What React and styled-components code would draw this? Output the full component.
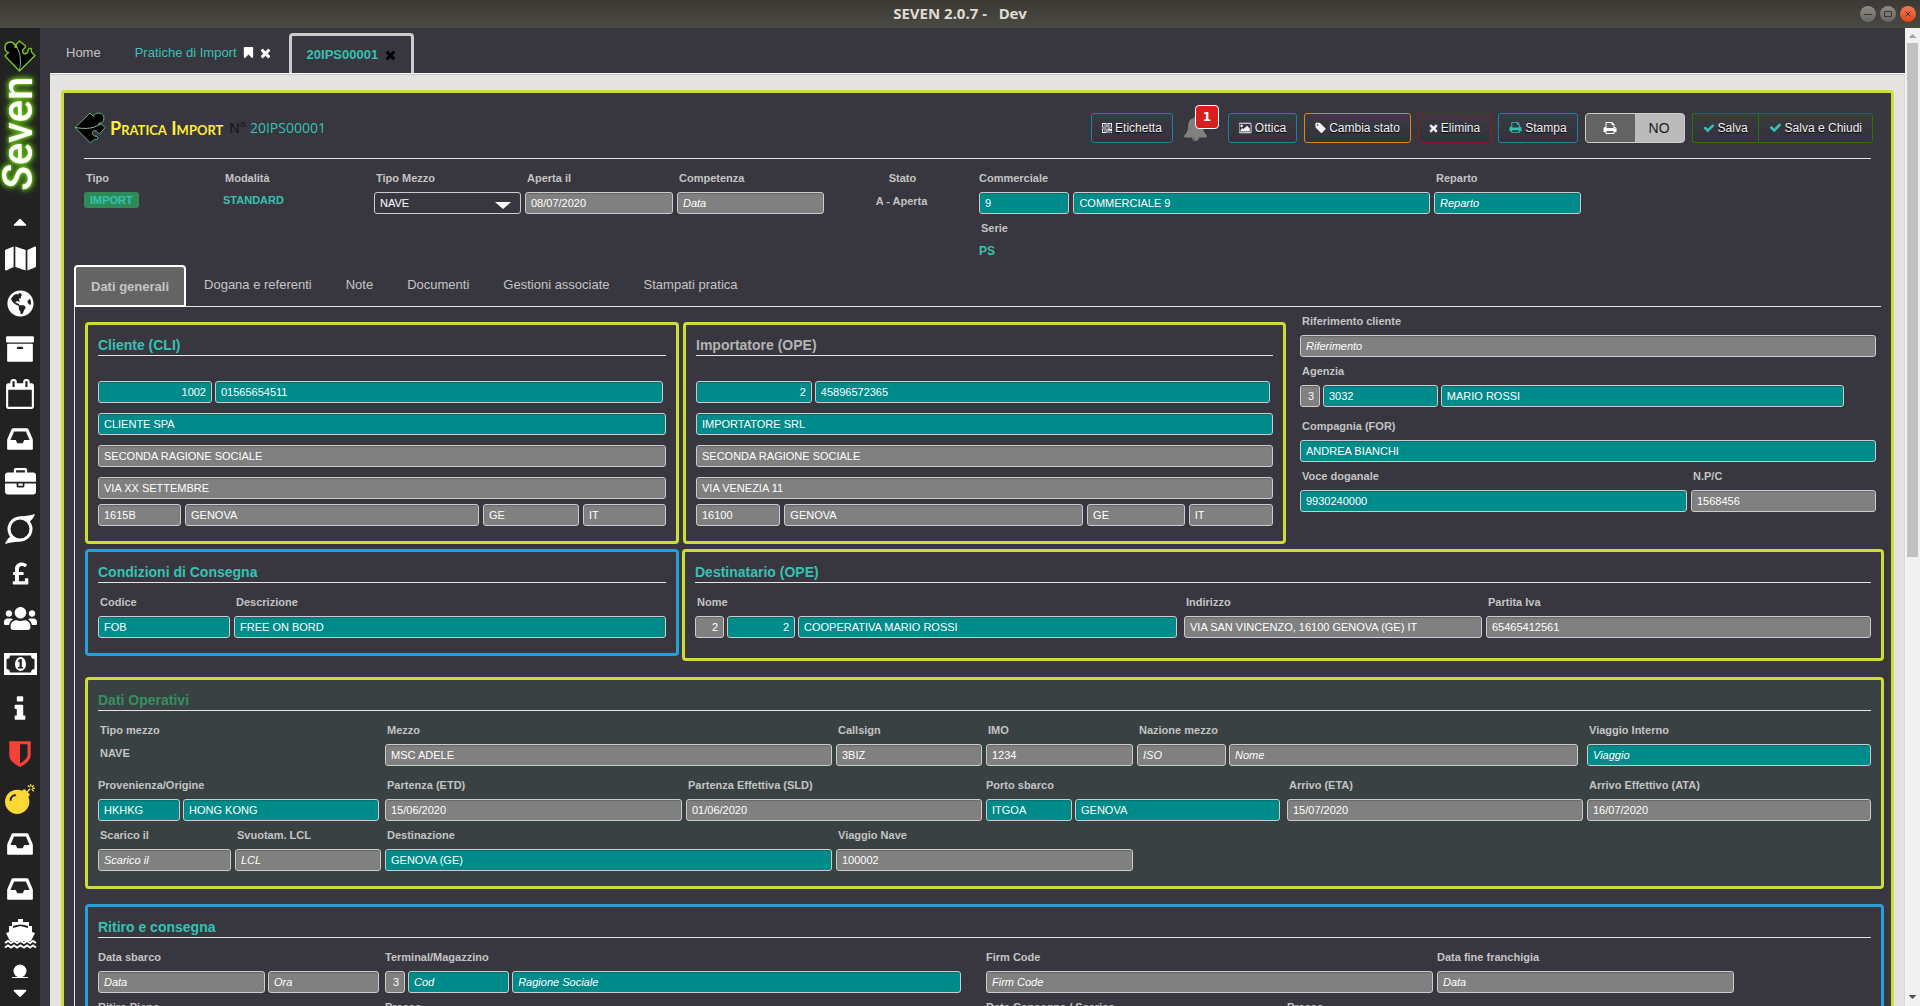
import React, { useId } from "react";
import styled, { createGlobalStyle, css } from "styled-components";
import { FaBomb, FaGlobeAmericas, FaMap, FaPoundSign, FaUsers } from "react-icons/fa";

const colors = {
  dark: "#383740",
  sidebar: "#222222",
  teal: "#35c2b3",
  field: "#008b8b",
  muted: "#808080",
  text: "#c4c4c4",
  lime: "#cddc39",
  blue: "#25a0da",
};

const GlobalStyle = createGlobalStyle`
  * {
    box-sizing: border-box;
  }
  body {
    margin: 0;
    background: ${colors.dark};
    font-family: "Liberation Sans", Arial, sans-serif;
    font-size: 11px;
    color: ${colors.text};
  }
  button, input, select {
    font-family: inherit;
    margin: 0;
  }
`;

/* ---------- icons ---------- */

const paths = {
  check: "M1671 566q0 40-28 68l-724 724-136 136q-28 28-68 28t-68-28l-136-136-362-362q-28-28-28-68t28-68l136-136q28-28 68-28t68 28l294 295 656-657q28-28 68-28t68 28l136 136q28 28 28 68z",
  times: "M1490 1322q0 40-28 68l-136 136q-28 28-68 28t-68-28l-294-294-294 294q-28 28-68 28t-68-28l-136-136q-28-28-28-68t28-68l294-294-294-294q-28-28-28-68t28-68l136-136q28-28 68-28t68 28l294 294 294-294q28-28 68-28t68 28l136 136q28 28 28 68t-28 68l-294 294 294 294q28 28 28 68z",
  tag: "M576 448q0-53-37.5-90.5t-90.5-37.5-90.5 37.5-37.5 90.5 37.5 90.5 90.5 37.5 90.5-37.5 37.5-90.5zm1067 576q0 53-37 90l-491 492q-39 37-91 37-53 0-90-37l-715-716q-38-37-64.5-101t-26.5-117v-416q0-52 38-90t90-38h416q53 0 117 26.5t102 64.5l715 714q37 39 37 91z",
  bookmark: "M1420 128q23 0 44 9 33 13 52.5 41t19.5 62v1289q0 34-19.5 62t-52.5 41q-19 8-44 8-48 0-83-32l-441-424-441 424q-36 33-83 33-23 0-44-9-33-13-52.5-41t-19.5-62v-1289q0-34 19.5-62t52.5-41q21-9 44-9h1048z",
  inbox: "M1151 960h316q-1-3-2.5-8.5t-2.5-7.5l-212-496h-708l-212 496q-1 3-2.5 8.5t-2.5 7.5h316l95 192h320zm513 30v482q0 26-19 45t-45 19h-1408q-26 0-45-19t-19-45v-482q0-62 25-123l238-552q10-25 36.5-42t52.5-17h832q26 0 52.5 17t36.5 42l238 552q25 61 25 123z",
  print: "M448 1536h896v-256h-896v256zm0-640h896v-384h-160q-40 0-68-28t-28-68v-160h-640v640zm1152 64q0-26-19-45t-45-19-45 19-19 45 19 45 45 19 45-19 19-45zm128 0v416q0 13-9.5 22.5t-22.5 9.5h-224v160q0 40-28 68t-68 28h-960q-40 0-68-28t-28-68v-160h-224q-13 0-22.5-9.5t-9.5-22.5v-416q0-79 56.5-135.5t135.5-56.5h64v-544q0-40 28-68t68-28h672q40 0 88 20t76 48l152 152q28 28 48 76t20 88v256h64q79 0 135.5 56.5t56.5 135.5z",
  briefcase: "M640 256h512v-128h-512v128zm1152 640v480q0 66-47 113t-113 47h-1472q-66 0-113-47t-47-113v-480h672v160q0 26 19 45t45 19h320q26 0 45-19t19-45v-160h672zm-768 0v128h-256v-128h256zm768-480v384h-1792v-384q0-66 47-113t113-47h352v-160q0-40 28-68t68-28h576q40 0 68 28t28 68v160h352q66 0 113 47t47 113z",
  info: "M1216 1344v128q0 26-19 45t-45 19h-512q-26 0-45-19t-19-45v-128q0-26 19-45t45-19h64v-384h-64q-26 0-45-19t-19-45v-128q0-26 19-45t45-19h384q26 0 45 19t19 45v576h64q26 0 45 19t19 45zm-128-1152v192q0 26-19 45t-45 19h-256q-26 0-45-19t-19-45v-192q0-26 19-45t45-19h256q26 0 45 19t19 45z",
  archive: "M1088 832q0-26-19-45t-45-19h-256q-26 0-45 19t-19 45 19 45 45 19h256q26 0 45-19t19-45zm576-192v960q0 26-19 45t-45 19h-1408q-26 0-45-19t-19-45v-960q0-26 19-45t45-19h1408q26 0 45 19t19 45zm64-448v256q0 26-19 45t-45 19h-1536q-26 0-45-19t-19-45v-256q0-26 19-45t45-19h1536q26 0 45 19t19 45z",
  shield: "M1344 960v-640h-448v1137q119-63 213-137 235-184 235-360zm192-768v768q0 86-33.5 170.5t-83 150-118 127.5-126.5 103-121 77.5-89.5 49.5-42.5 20q-12 6-26 6t-26-6q-16-7-42.5-20t-89.5-49.5-121-77.5-126.5-103-118-127.5-83-150-33.5-170.5v-768q0-26 19-45t45-19h1152q26 0 45 19t19 45z",
  calendar: "M192 1664h1408v-1024h-1408v1024zm384-1216v-288q0-14-9-23t-23-9h-64q-14 0-23 9t-9 23v288q0 14 9 23t23 9h64q14 0 23-9t9-23zm768 0v-288q0-14-9-23t-23-9h-64q-14 0-23 9t-9 23v288q0 14 9 23t23 9h64q14 0 23-9t9-23zm384-64v1280q0 52-38 90t-90 38h-1408q-52 0-90-38t-38-90v-1280q0-52 38-90t90-38h128v-96q0-66 47-113t113-47h64q66 0 113 47t47 113v96h384v-96q0-66 47-113t113-47h64q66 0 113 47t47 113v96h128q52 0 90 38t38 90z",
  image: "M576 576q0 80-56 136t-136 56-136-56-56-136 56-136 136-56 136 56 56 136zm1024 384v448h-1408v-192l320-320 160 160 512-512zm96-704h-1600q-13 0-22.5 9.5t-9.5 22.5v1216q0 13 9.5 22.5t22.5 9.5h1600q13 0 22.5-9.5t9.5-22.5v-1216q0-13-9.5-22.5t-22.5-9.5zm160 32v1216q0 66-47 113t-113 47h-1600q-66 0-113-47t-47-113v-1216q0-66 47-113t113-47h1600q66 0 113 47t47 113z",
  bell: "M912 1696q0-16-16-16-59 0-101.5-42.5t-42.5-101.5q0-16-16-16t-16 16q0 73 51.5 124.5t124.5 51.5q16 0 16-16zm816-288q0 52-38 90t-90 38h-448q0 106-75 181t-181 75-181-75-75-181h-448q-52 0-90-38t-38-90q50-42 91-88t85-119.5 74.5-158.5 50-206 19.5-260q0-152 117-282.5t307-158.5q-8-19-8-39 0-40 28-68t68-28 68 28 28 68q0 20-8 39 190 28 307 158.5t117 282.5q0 139 19.5 260t50 206 74.5 158.5 85 119.5 91 88z",
  caretUp: "M1408 1216q0 26-19 45t-45 19h-896q-26 0-45-19t-19-45 19-45l448-448q19-19 45-19t45 19l448 448q19 19 19 45z",
  caretDown: "M1408 704q0 26-19 45l-448 448q-19 19-45 19t-45-19l-448-448q-19-19-19-45t19-45 45-19h896q26 0 45 19t19 45z",
};

// glyphs whose drawing is not as wide as the square: [left, width]
const extents = {
  image: [0, 1920],
  times: [224, 1344],
  tag: [64, 1642],
};

const Glyph = ({ name, size = 12, color = "currentColor" }) => {
  const [left, width] = extents[name] || [0, 1792];
  return (
    <svg
      width={Math.round((size * width) / 1792)}
      height={size}
      viewBox={`${left} 0 ${width} 1792`}
      fill={color}
      aria-hidden="true"
    >
      <path d={paths[name]} />
    </svg>
  );
};

const QrGlyph = () => (
  <svg width="10" height="10" viewBox="0 0 11 11" fill="currentColor" aria-hidden="true">
    <path fillRule="evenodd" d="M0 0h5v5H0zM1 1v3h3V1zM6 0h5v5H6zM7 1v3h3V1zM0 6h5v5H0zM1 7v3h3V7z" />
    <path d="M2 2h1v1H2zM8 2h1v1H8zM2 8h1v1H2zM6 6h3v1h1V6h1v3H8V8H7v3H6zM8 10h1v1H8zM10 10h1v1h-1z" />
  </svg>
);

const OrbitGlyph = () => (
  <svg width="32" height="32" viewBox="0 0 32 32" aria-hidden="true">
    <circle cx="16" cy="16" r="11" fill="none" stroke="#fff" strokeWidth="3" />
    <path d="M8 7C13 2 22 4 31 1c-1 3-3 6-6 8-4-4-10-4-17-2zM24 25c-5 5-14 3-23 6 1-3 3-6 6-8 4 4 10 4 17 2z" fill="#fff" />
  </svg>
);

const MoneyGlyph = () => (
  <svg width="33" height="22" viewBox="0 0 33 22" aria-hidden="true">
    <path fillRule="evenodd" d="M0 0h33v22H0zM6 2.500Q6 6 2.500 6v10Q6 16 6 19.500h21Q27 16 30.500 16V6Q27 6 27 2.500z" fill="#fff" />
    <ellipse cx="16.500" cy="11" rx="5.500" ry="7" fill="#fff" />
    <path d="M14 7.500l2-1.500h1.800v8H19v1.500h-5V14h1.500V8.600l-1 .6z" fill="#222" />
  </svg>
);

const ShipGlyph = () => (
  <svg width="33" height="32" viewBox="0 0 33 32" fill="#fff" aria-hidden="true">
    <path d="M14 1h5v3h6v4h3v6l3 1-4 8H6l-4-8 3-1V8h3V4h6zM9 8v2l7.500-2L24 10V8c-5-2-10-2-15 0z" />
    <path d="M1 25l3-2 3 2 3-2 3 2 3.500-2 3.500 2 3-2 3 2 3-2 3 2M1 29.500l3-2 3 2 3-2 3 2 3.500-2 3.500 2 3-2 3 2 3-2 3 2" fill="none" stroke="#fff" strokeWidth="2" />
  </svg>
);

const UserGlyph = () => (
  <svg width="16" height="14" viewBox="0 0 16 14" fill="#fff" aria-hidden="true">
    <circle cx="8" cy="7" r="6.500" />
    <path d="M0 13h16v1H0z" />
  </svg>
);

const PuzzleLogo = ({ upright }) => (
  <svg width="32" height="32" viewBox="0 0 32 32" overflow="visible" aria-hidden="true">
    <g transform={upright ? undefined : "rotate(90 16 16)"}>
      <path
        d="M15.500 31L1 16l3.500-3.500C0 11.500 0 4 4 2.500 8 1 12 4 11 7l2 .5-1-3L15.500 1 21.500 6c.5 2-3 3-3 5.500.5 3 4.500 3 5.500 0 0-2.500 1-3.500 3-3 1 1 0 2.500.5 3.500L31 15.500z"
        fill="#000"
        stroke={upright ? "#7cc52c" : "#5fb281"}
        strokeWidth={upright ? 1.4 : 1}
        strokeLinejoin="round"
      />
      <path d="M13 7.500c4 6 4 15 2.500 23" fill="none" stroke="#8fbf9a" strokeWidth="1" />
    </g>
  </svg>
);

/* ---------- window ---------- */

const Window = styled.div`
  display: flex;
  flex-direction: column;
  height: 100vh;
  overflow: hidden;
`;

const TitleBar = styled.header`
  display: grid;
  grid-template-columns: 1fr auto 1fr;
  align-items: center;
  flex: 0 0 28px;
  padding: 0 4px;
  background: linear-gradient(#3a3934, #4c4a44);
  color: #dfdbd2;
  font: bold 15px/20px "Noto Sans", sans-serif;
  white-space: pre;
`;

const WindowTitle = styled.span`
  grid-column: 2;
  padding-bottom: 2px;
`;

const WindowButtons = styled.div`
  grid-column: 3;
  display: flex;
  justify-content: flex-end;
  gap: 4px;
`;

const WindowButton = styled.button`
  display: flex;
  width: 16px;
  height: 16px;
  padding: 0;
  align-items: center;
  justify-content: center;
  border: 0;
  border-radius: 50%;
  background: ${p => (p.$close ? "linear-gradient(#f27a54, #dd4814)" : "linear-gradient(#8d8b86, #696762)")};
  box-shadow: 0 0 1px #222;
`;

const Body = styled.div`
  display: flex;
  flex: 1;
  min-height: 0;
`;

const Sidebar = styled.nav`
  display: flex;
  flex-direction: column;
  align-items: center;
  flex: 0 0 40px;
  overflow: hidden;
  padding-top: 12px;
  background: ${colors.sidebar};
`;

const LogoText = styled.svg`
  flex: 0 0 124px;
  overflow: visible;
  filter: drop-shadow(0 0 1px #7ed321) drop-shadow(0 0 2px #63b51b) drop-shadow(0 0 3px #4f9a12);
`;

const SideList = styled.div`
  display: flex;
  flex-direction: column;
  align-items: center;
  margin-top: 4px;
`;

const SideButton = styled.button`
  display: flex;
  flex: 0 0 45px;
  width: 40px;
  padding: 0;
  align-items: center;
  justify-content: center;
  border: 0;
  background: none;
  color: ${p => p.$color || "#fff"};
`;

const ScrollButton = styled(SideButton)`
  flex: 0 0 16px;
  margin-top: 14px;
`;

const LastItems = styled.div`
  display: flex;
  flex-direction: column;
  align-items: center;
  gap: 4px;
  padding-top: 8px;
`;

const Content = styled.div`
  display: flex;
  flex: 1;
  flex-direction: column;
  min-width: 0;
  padding-left: 10px;
  background: ${colors.dark};
`;

const TopTabs = styled.nav`
  display: flex;
  align-items: flex-end;
  flex: 0 0 45px;
`;

const TopTab = styled.div`
  display: flex;
  align-items: center;
  gap: 5px;
  height: 40px;
  font-size: 13px;
  padding: 0 16px 1px;
  color: ${colors.text};

  a {
    color: inherit;
    text-decoration: none;
  }

  ${p =>
    p.$open &&
    css`
      color: ${colors.teal};
      padding: 0 18px 1px 18px;
    `}

  ${p =>
    p.$active &&
    css`
      gap: 7px;
      padding: 0 15px;
      border: 3px solid #cccccc;
      border-bottom: 0;
      border-radius: 4px 4px 0 0;
      font-weight: bold;
    `}
`;

const TabAction = styled.button`
  display: flex;
  padding: 0;
  border: 0;
  background: none;
  color: ${p => p.$color || "#fff"};
`;

const Page = styled.main`
  flex: 1;
  min-height: 0;
  overflow: hidden;
  padding: 16px 10px 0 11px;
  border-top: 1px solid #fff;
  border-right: 1px solid #d8d8d8;
  background: #e5e4e2;
  box-shadow: inset 0 1px #c8c8c8;
`;

const Card = styled.section`
  border: 3px solid ${colors.lime};
  border-radius: 4px;
  background: ${colors.dark};
`;

const Scrollbar = styled.div`
  display: flex;
  flex: 0 0 15px;
  flex-direction: column;
  align-items: center;
  justify-content: space-between;
  background: #f1f1f1;
`;

const ScrollThumb = styled.div`
  flex: 1;
  width: 11px;
  margin-bottom: 43vh;
  background: #c1c1c1;
`;

const ScrollArrow = styled.span`
  width: 8px;
  height: 4px;
  margin: ${p => (p.$up ? "6px 0 5px" : "5px 0 7px")};
  background: ${p => (p.$up ? "#a3a3a3" : "#505050")};
  clip-path: ${p => (p.$up ? "polygon(0 100%, 50% 0, 100% 100%)" : "polygon(0 0, 100% 0, 50% 100%)")};
`;

/* ---------- page header ---------- */

const PageHeader = styled.div`
  display: flex;
  align-items: center;
  justify-content: space-between;
  height: 65px;
  padding: 4px 18px 0 10px;
`;

const Heading = styled.h1`
  display: flex;
  align-items: center;
  gap: 4px;
  margin: 0;
  color: #ffeb3b;
  font: bold 18px Lato, sans-serif;
  font-variant: small-caps;
`;

const HeadingNumber = styled.span`
  margin-left: ${p => (p.$spaced ? "2px" : "0")};
  color: ${p => p.$color};
  font: 500 14px "Open Sans", sans-serif;
`;

const Toolbar = styled.div`
  display: flex;
  align-items: center;
  gap: 7px;
`;

const ToolButton = styled.button`
  display: flex;
  align-items: center;
  justify-content: center;
  gap: 3px;
  height: 30px;
  padding: 0 10px;
  border: 1px solid ${p => p.$border};
  border-radius: 3px;
  background: linear-gradient(#3a3a43, #33323b);
  color: #f2f2f2;
  font-size: 12px;
  text-shadow: 0 1px 1px #000;
`;

const ButtonGroup = styled.div`
  display: flex;

  ${ToolButton}:first-child {
    border-radius: 3px 0 0 3px;
    border-right: 0;
  }
  ${ToolButton}:last-child {
    border-radius: 0 3px 3px 0;
  }
`;

const BellButton = styled.button`
  position: relative;
  display: flex;
  margin: 0 13px 0 3px;
  padding: 2px 0 0;
  border: 0;
  background: none;
`;

const BellBadge = styled.span`
  position: absolute;
  top: -9px;
  left: 12px;
  width: 24px;
  height: 24px;
  border: 1px solid #fff;
  border-radius: 4px;
  background: #d91e1e;
  color: #fff;
  font: bold 12px/22px "DejaVu Sans", sans-serif;
  text-align: center;
`;

const PrintToggle = styled.button`
  display: grid;
  grid-template-columns: 1fr 1fr;
  width: 100px;
  height: 30px;
  padding: 0;
  border: 1px solid #cccccc;
  border-radius: 4px;
  overflow: hidden;
  background: #bbbbbb;
  color: #1c1c1c;
  font-size: 14px;

  span {
    display: flex;
    align-items: center;
    justify-content: center;
  }
  span:first-child {
    background: #636363;
    color: #fff;
  }
`;

const Summary = styled.div`
  display: grid;
  grid-template-columns: 135fr 147fr 147fr 148fr 147fr 147fr 451fr 147fr 286fr;
  gap: 4px;
  height: 107px;
  margin: 0 20px;
  padding-top: 5px;
  border-top: 1px solid #e5e5e5;
`;

/* ---------- fields ---------- */

const Label = styled.label`
  display: block;
  padding-left: ${p => (p.$flush ? "0" : "2px")};
  color: ${colors.text};
  font-size: 11px;
  font-weight: bold;
  line-height: 28px;
  white-space: nowrap;
`;

const boxStyle = css`
  width: 100%;
  min-width: 0;
  height: 22px;
  border: 1px solid #cccccc;
  border-radius: 3px;
  color: #fff;
  font-size: 11px;
`;

const Input = styled.input`
  ${boxStyle}
  padding: 0 5px;
  background: ${p => (p.$teal ? colors.field : colors.muted)};
  box-shadow: inset 0 1px 1px rgba(0, 0, 0, 0.2);
  text-align: ${p => (p.$right ? "right" : "left")};

  &::placeholder {
    color: #fff;
    font-style: italic;
    opacity: 1;
  }
`;

const SelectBox = styled.div`
  position: relative;

  svg {
    position: absolute;
    right: 10px;
    top: 10px;
    pointer-events: none;
  }
`;

const Select = styled.select`
  ${boxStyle}
  display: block;
  padding: 0 5px;
  background: ${colors.dark};
  appearance: none;
`;

const Line = styled.div`
  display: grid;
  grid-template-columns: ${p => p.$cols || "1fr"};
  column-gap: ${p => p.$gap || 4}px;
  padding-right: ${p => p.$pad || 0}px;
  margin-top: ${p => p.$top || 0}px;
`;

const Value = styled.div`
  color: ${p => (p.$teal ? colors.teal : colors.text)};
  font-size: ${p => (p.$large ? "12px" : "11px")};
  font-weight: bold;
  line-height: ${p => (p.$tall ? "19px" : "16px")};
  padding-left: ${p => (p.$indent ? "2px" : "0")};
`;

const Badge = styled.span`
  display: block;
  width: fit-content;
  padding: 0 6px;
  border-radius: 3px;
  background: #2e8b57;
  color: ${colors.teal};
  font-size: 11px;
  font-weight: bold;
  line-height: 16px;
`;

const CenteredCell = styled.div`
  text-align: center;
`;

// boxes: [{ v: value, ph: placeholder, teal, right }]
const Field = ({ label, flush, boxes, cols, gap = 3, pad }) => {
  const id = useId();
  return (
    <div>
      <Label htmlFor={id} $flush={flush}>{label}</Label>
      <Line $cols={cols} $gap={gap} $pad={pad}>
        {boxes.map((box, i) => (
          <Box key={i} id={i === 0 ? id : undefined} label={i === 0 ? undefined : `${label} ${i + 1}`} {...box} />
        ))}
      </Line>
    </div>
  );
};

const Box = ({ id, label, v, ph, teal, right }) => (
  <Input id={id} aria-label={label} defaultValue={v} placeholder={ph} $teal={teal} $right={right} />
);

/* ---------- panels ---------- */

const Tabs = styled.div`
  display: flex;
  align-items: flex-end;
  margin: 0 10px;
  border-bottom: 1px solid #e5e5e5;
`;

const Tab = styled.button`
  height: 41px;
  padding: 0 17px 2px;
  border: 0;
  background: none;
  color: ${colors.text};
  font-size: 13px;

  ${p =>
    p.$active &&
    css`
      height: 42px;
      padding: 0 15px;
      margin: 0 1px -1px 0;
      border: 2px solid #fff;
      border-radius: 4px 4px 0 0;
      background: #646464;
      font-weight: bold;
    `}
`;

const TabPanel = styled.div`
  margin: 0 7px 0 10px;
  padding: 0 0 20px 10px;
  border-left: 1px solid #e5e5e5;
`;

const Columns = styled.div`
  display: grid;
  grid-template-columns: ${p => p.$cols};
  column-gap: ${p => p.$gap}px;
  align-items: start;
  margin-top: ${p => p.$top || 0}px;
`;

const Panel = styled.section`
  margin-top: ${p => p.$top || 0}px;
  padding: 10px 10px ${p => (p.$tall ? "20px" : "15px")};
  border: 3px solid ${p => p.$border || colors.lime};
  border-radius: 4px;
  background: ${p => p.$bg || "transparent"};
`;

const PanelTitle = styled.h2`
  margin: 0 0 5px;
  border-bottom: 1px solid #e5e5e5;
  color: ${p => p.$color || colors.teal};
  font-size: 14px;
  line-height: 20px;
`;

const SideColumn = styled.div`
  padding: 0 8px 0 10px;
`;

const sidebarItems = [
  ["Mappa", <FaMap size={31} />],
  ["Mondo", <FaGlobeAmericas size={27} />],
  ["Archivio", <Glyph name="archive" size={30} />],
  ["Calendario", <Glyph name="calendar" size={30} />],
  ["Posta", <Glyph name="inbox" size={30} />],
  ["Lavori", <Glyph name="briefcase" size={31} />],
  ["Cicli", <OrbitGlyph />],
  ["Valuta", <FaPoundSign size={25} />],
  ["Utenti", <FaUsers size={33} />],
  ["Pagamenti", <MoneyGlyph />],
  ["Informazioni", <Glyph name="info" size={30} />],
  ["Sicurezza", <Glyph name="shield" size={30} />, "#f44336"],
  ["Reset", <FaBomb size={30} />, "#fdd835"],
  ["In arrivo", <Glyph name="inbox" size={30} />],
  ["In uscita", <Glyph name="inbox" size={30} />],
  ["Navi", <ShipGlyph />],
];

const addressCols = "83fr 294fr 96fr 83fr";

const PartyPanel = ({ title, color, code, vat, name, street, zip }) => (
  <Panel $top={15}>
    <PanelTitle $color={color}>{title}</PanelTitle>
    <Line $cols="114fr 448fr" $gap={3} $pad={3} $top={25}>
      <Box label="Codice" v={code} teal right />
      <Box label="Partita Iva" v={vat} teal />
    </Line>
    <Line $top={10}>
      <Box label="Ragione sociale" v={name} teal />
    </Line>
    <Line $top={10}>
      <Box label="Seconda ragione sociale" v="SECONDA RAGIONE SOCIALE" />
    </Line>
    <Line $top={10}>
      <Box label="Indirizzo" v={street} />
    </Line>
    <Line $cols={addressCols} $top={5}>
      <Box label="CAP" v={zip} />
      <Box label="Città" v="GENOVA" />
      <Box label="Provincia" v="GE" />
      <Box label="Nazione" v="IT" />
    </Line>
  </Panel>
);

const SummaryRow = () => (
  <Summary>
    <div>
      <Label as="div">Tipo</Label>
      <Badge>IMPORT</Badge>
    </div>
    <div>
      <Label as="div">Modalità</Label>
      <Value $teal>STANDARD</Value>
    </div>
    <div>
      <Label htmlFor="mezzo">Tipo Mezzo</Label>
      <SelectBox>
        <Select id="mezzo" defaultValue="NAVE">
          <option>NAVE</option>
        </Select>
        <svg width="16" height="7" viewBox="0 0 16 7" fill="#fff" aria-hidden="true">
          <path d="M0 0h16L8 7z" />
        </svg>
      </SelectBox>
    </div>
    <Field label="Aperta il" boxes={[{ v: "08/07/2020" }]} />
    <Field label="Competenza" boxes={[{ ph: "Data" }]} />
    <CenteredCell>
      <Label as="div">Stato</Label>
      <Value $tall>A - Aperta</Value>
    </CenteredCell>
    <div>
      <Field
        label="Commerciale"
        flush
        cols="90fr 355fr"
        gap={4}
        boxes={[{ v: "9", teal: true }, { v: "COMMERCIALE 9", teal: true }]}
      />
      <Label as="div">Serie</Label>
      <Value $teal $large $tall>PS</Value>
    </div>
    <Field label="Reparto" boxes={[{ ph: "Reparto", teal: true }]} />
  </Summary>
);

const App = () => (
  <Window>
    <GlobalStyle />
    <TitleBar>
      <WindowTitle>{"SEVEN 2.0.7 -   Dev"}</WindowTitle>
      <WindowButtons>
        <WindowButton aria-label="Riduci">
          <svg width="8" height="8" stroke="#3a3934"><path d="M0 4.500h8" /></svg>
        </WindowButton>
        <WindowButton aria-label="Ingrandisci">
          <svg width="8" height="8" fill="none" stroke="#3a3934"><path d="M.5 1.500h7v5h-7z" /></svg>
        </WindowButton>
        <WindowButton aria-label="Chiudi" $close>
          <svg width="8" height="8" stroke="#3a3934"><path d="M1.500 1.500l5 5M6.500 1.500l-5 5" /></svg>
        </WindowButton>
      </WindowButtons>
    </TitleBar>

    <Body>
      <Sidebar>
        <PuzzleLogo upright />
        <LogoText width="40" height="124" viewBox="0 0 40 124">
          <text x="-118" y="32" transform="rotate(-90)" fill="#fff" fontFamily="Roboto, sans-serif" fontSize="42" fontWeight="500">
            <tspan fontStyle="italic">S</tspan>even
          </text>
        </LogoText>
        <ScrollButton aria-label="Scorri su">
          <Glyph name="caretUp" size={22} />
        </ScrollButton>
        <SideList>
          {sidebarItems.map(([name, icon, color]) => (
            <SideButton key={name} aria-label={name} $color={color}>{icon}</SideButton>
          ))}
        </SideList>
        <LastItems>
          <UserGlyph />
          <Glyph name="caretDown" size={22} color="#fff" />
        </LastItems>
      </Sidebar>

      <Content>
        <TopTabs>
          <TopTab><a href="#home">Home</a></TopTab>
          <TopTab $open>
            <a href="#pratiche">Pratiche di Import</a>
            <TabAction aria-label="Segnalibro"><Glyph name="bookmark" size={13} /></TabAction>
            <TabAction aria-label="Chiudi pratiche"><Glyph name="times" size={14} /></TabAction>
          </TopTab>
          <TopTab $open $active>
            <a href="#20IPS00001">20IPS00001</a>
            <TabAction aria-label="Chiudi 20IPS00001" $color="#000"><Glyph name="times" size={14} /></TabAction>
          </TopTab>
        </TopTabs>

        <Page>
          <Card>
            <PageHeader>
              <Heading>
                <PuzzleLogo />
                Pratica Import
                <HeadingNumber $spaced $color="#111">N°</HeadingNumber>
                <HeadingNumber $color={colors.teal}>20IPS00001</HeadingNumber>
              </Heading>
              <Toolbar>
                <ToolButton $border="#1782a5"><QrGlyph />Etichetta</ToolButton>
                <BellButton aria-label="Notifiche">
                  <Glyph name="bell" size={25} color="#808080" />
                  <BellBadge>1</BellBadge>
                </BellButton>
                <ToolButton $border="#1782a5"><Glyph name="image" />Ottica</ToolButton>
                <ToolButton $border="#dd8806"><Glyph name="tag" />Cambia stato</ToolButton>
                <ToolButton $border="#8a1c20"><Glyph name="times" />Elimina</ToolButton>
                <ToolButton $border="#1782a5"><Glyph name="print" color={colors.teal} size={13} />Stampa</ToolButton>
                <PrintToggle aria-pressed="false">
                  <span><Glyph name="print" size={14} /></span>
                  <span>NO</span>
                </PrintToggle>
                <ButtonGroup>
                  <ToolButton $border="#2a7300"><Glyph name="check" color={colors.teal} />Salva</ToolButton>
                  <ToolButton $border="#2a7300"><Glyph name="check" color={colors.teal} size={13} />Salva e Chiudi</ToolButton>
                </ButtonGroup>
              </Toolbar>
            </PageHeader>

            <SummaryRow />

            <Tabs role="tablist">
              <Tab role="tab" aria-selected="true" $active>Dati generali</Tab>
              <Tab role="tab">Dogana e referenti</Tab>
              <Tab role="tab">Note</Tab>
              <Tab role="tab">Documenti</Tab>
              <Tab role="tab">Gestioni associate</Tab>
              <Tab role="tab">Stampati pratica</Tab>
            </Tabs>

            <TabPanel>
              <Columns $cols="594fr 603fr 594fr" $gap={4}>
                <PartyPanel
                  title="Cliente (CLI)"
                  code="1002"
                  vat="01565654511"
                  name="CLIENTE SPA"
                  street="VIA XX SETTEMBRE"
                  zip="1615B"
                />
                <PartyPanel
                  title="Importatore (OPE)"
                  color="#b4b4b4"
                  code="2"
                  vat="45896572365"
                  name="IMPORTATORE SRL"
                  street="VIA VENEZIA 11"
                  zip="16100"
                />
                <SideColumn>
                  <Field label="Riferimento cliente" boxes={[{ ph: "Riferimento" }]} />
                  <Field
                    label="Agenzia"
                    cols="20px 115fr 404fr"
                    pad={32}
                    boxes={[{ v: "3", right: true }, { v: "3032", teal: true }, { v: "MARIO ROSSI", teal: true }]}
                  />
                  <Line $top={5}>
                    <Field label="Compagnia (FOR)" boxes={[{ v: "ANDREA BIANCHI", teal: true }]} />
                  </Line>
                  <Line $cols="387fr 185fr">
                    <Field label="Voce doganale" boxes={[{ v: "9930240000", teal: true }]} />
                    <Field label="N.P/C" boxes={[{ v: "1568456" }]} />
                  </Line>
                </SideColumn>
              </Columns>

              <Columns $cols="594fr 1202fr" $gap={3} $top={5}>
                <Panel $border={colors.blue}>
                  <PanelTitle>Condizioni di Consegna</PanelTitle>
                  <Line $cols="132fr 432fr">
                    <Field label="Codice" boxes={[{ v: "FOB", teal: true }]} />
                    <Field label="Descrizione" boxes={[{ v: "FREE ON BORD", teal: true }]} />
                  </Line>
                </Panel>
                <Panel $tall>
                  <PanelTitle>Destinatario (OPE)</PanelTitle>
                  <Line $cols="485fr 298fr 385fr">
                    <Field
                      label="Nome"
                      cols="29px 68fr 379fr"
                      pad={3}
                      boxes={[{ v: "2", right: true }, { v: "2", teal: true, right: true }, { v: "COOPERATIVA MARIO ROSSI", teal: true }]}
                    />
                    <Field label="Indirizzo" boxes={[{ v: "VIA SAN VINCENZO, 16100 GENOVA (GE) IT" }]} />
                    <Field label="Partita Iva" boxes={[{ v: "65465412561" }]} />
                  </Line>
                </Panel>
              </Columns>

              <Panel $top={16} $bg="#394143">
                <PanelTitle $color="#36905f">Dati Operativi</PanelTitle>
                <Line $cols="283fr 447fr 146fr 147fr 446fr 284fr">
                  <div>
                    <Label as="div">Tipo mezzo</Label>
                    <Value $indent $tall>NAVE</Value>
                  </div>
                  <Field label="Mezzo" boxes={[{ v: "MSC ADELE" }]} />
                  <Field label="Callsign" boxes={[{ v: "3BIZ" }]} />
                  <Field label="IMO" boxes={[{ v: "1234" }]} />
                  <Field label="Nazione mezzo" cols="89fr 349fr" pad={5} boxes={[{ ph: "ISO" }, { ph: "Nome" }]} />
                  <Field label="Viaggio Interno" boxes={[{ ph: "Viaggio", teal: true }]} />
                </Line>
                <Line $cols="283fr 297fr 296fr 297fr 296fr 284fr" $top={5}>
                  <Field
                    label="Provenienza/Origine"
                    flush
                    cols="82fr 196fr"
                    pad={2}
                    boxes={[{ v: "HKHKG", teal: true }, { v: "HONG KONG", teal: true }]}
                  />
                  <Field label="Partenza (ETD)" boxes={[{ v: "15/06/2020" }]} />
                  <Field label="Partenza Effettiva (SLD)" boxes={[{ v: "01/06/2020" }]} />
                  <Field
                    label="Porto sbarco"
                    flush
                    cols="86fr 205fr"
                    pad={3}
                    boxes={[{ v: "ITGOA", teal: true }, { v: "GENOVA", teal: true }]}
                  />
                  <Field label="Arrivo (ETA)" boxes={[{ v: "15/07/2020" }]} />
                  <Field label="Arrivo Effettivo (ATA)" boxes={[{ v: "16/07/2020" }]} />
                </Line>
                <Line $cols="133fr 146fr 447fr 297fr 734fr">
                  <Field label="Scarico il" boxes={[{ ph: "Scarico il" }]} />
                  <Field label="Svuotam. LCL" boxes={[{ ph: "LCL" }]} />
                  <Field label="Destinazione" boxes={[{ v: "GENOVA (GE)", teal: true }]} />
                  <Field label="Viaggio Nave" boxes={[{ v: "100002" }]} />
                </Line>
              </Panel>

              <Panel $top={15} $border={colors.blue}>
                <PanelTitle>Ritiro e consegna</PanelTitle>
                <Line $cols="283fr 597fr 447fr 297fr 133fr">
                  <Field label="Data sbarco" flush cols="167fr 111fr" pad={2} boxes={[{ ph: "Data" }, { ph: "Ora" }]} />
                  <Field
                    label="Terminal/Magazzino"
                    flush
                    cols="20px 101fr 448fr"
                    pad={21}
                    boxes={[{ v: "3", right: true }, { ph: "Cod", teal: true }, { ph: "Ragione Sociale", teal: true }]}
                  />
                  <Field label="Firm Code" flush boxes={[{ ph: "Firm Code" }]} />
                  <Field label="Data fine franchigia" flush boxes={[{ ph: "Data" }]} />
                </Line>
                <Line $cols="283fr 597fr 297fr 584fr">
                  <Field label="Ritiro Pieno" flush boxes={[{ ph: "Data" }]} />
                  <Field label="Presso" flush boxes={[{ ph: "Presso" }]} />
                  <Field label="Data Consegna / Scarico" flush boxes={[{ ph: "Data" }]} />
                  <Field label="Presso" flush boxes={[{ ph: "Presso" }]} />
                </Line>
              </Panel>
            </TabPanel>
          </Card>
        </Page>
      </Content>

      <Scrollbar>
        <ScrollArrow $up />
        <ScrollThumb />
        <ScrollArrow />
      </Scrollbar>
    </Body>
  </Window>
);

export default App;
